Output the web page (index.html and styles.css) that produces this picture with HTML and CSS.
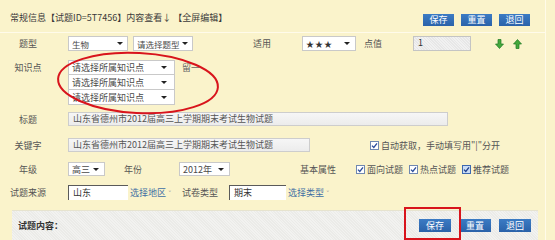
FILE: index.html
```html
<!DOCTYPE html>
<html lang="zh-CN">
<head>
    <meta charset="UTF-8">
    <title>试题内容查看</title>
    <link rel="stylesheet" href="styles.css">
</head>
<body>
    <div class="page">
        <!-- 标题栏 -->
        <div class="head">
            <span class="head-title">常规信息【试题ID=5T7456】内容查看↓ 【全屏编辑】</span>
            <div class="btns">
                <button class="btn">保存</button>
                <button class="btn">重置</button>
                <button class="btn">退回</button>
            </div>
        </div>

        <!-- 题型 / 适用 / 点值 -->
        <div class="row r-type">
            <span class="lbl">题型</span>
            <span class="sel w-type">生物</span>
            <span class="sel w-type ml5">请选择题型</span>
            <span class="txt t-fit">适用</span>
            <span class="sel w-level"><span class="stars">★★★</span></span>
            <span class="txt t-score">点值</span>
            <span class="inp inp-score">1</span>
            <svg class="arrow a-down" width="9" height="10" viewBox="0 0 9 10"><path d="M3 .5h3v4.5h2.5L4.5 9.5.5 5H3z" fill="#44a83c" stroke="#1e7a24" stroke-width=".7"/></svg>
            <svg class="arrow a-up" width="9" height="10" viewBox="0 0 9 10"><path d="M3 9.5h3V5h2.5L4.5.5.5 5H3z" fill="#44a83c" stroke="#1e7a24" stroke-width=".7"/></svg>
        </div>

        <!-- 知识点 -->
        <div class="row r-kp">
            <span class="lbl lbl-top">知识点</span>
            <div class="kp-list">
                <span class="sel w-kp">请选择所属知识点</span>
                <span class="sel w-kp">请选择所属知识点</span>
                <span class="sel w-kp">请选择所属知识点</span>
            </div>
            <span class="kp-note">留一</span>
        </div>

        <!-- 标题 -->
        <div class="row r-title">
            <span class="lbl">标题</span>
            <span class="inp inp-grey w-title">山东省德州市2012届高三上学期期末考试生物试题</span>
        </div>

        <!-- 关键字 -->
        <div class="row r-key">
            <span class="lbl">关键字</span>
            <span class="inp inp-grey w-key">山东省德州市2012届高三上学期期末考试生物试题</span>
            <span class="check ml60">
                <svg class="cb" width="9" height="9" viewBox="0 0 9 9"><rect x=".5" y=".5" width="8" height="8" fill="#fff" stroke="#7088b0"/><path d="M2 4.6l1.8 1.9L7 2.4" fill="none" stroke="#2a4c9a" stroke-width="1.3"/></svg>
                自动获取，手动填写用"|"分开
            </span>
        </div>

        <!-- 年级 / 年份 / 基本属性 -->
        <div class="row r-grade">
            <span class="lbl">年级</span>
            <span class="sel w-grade">高三</span>
            <span class="txt t-year">年份</span>
            <span class="sel w-year">2012年</span>
            <span class="txt t-attr">基本属性</span>
            <span class="check ml19">
                <svg class="cb" width="9" height="9" viewBox="0 0 9 9"><rect x=".5" y=".5" width="8" height="8" fill="#fff" stroke="#7088b0"/><path d="M2 4.6l1.8 1.9L7 2.4" fill="none" stroke="#2a4c9a" stroke-width="1.3"/></svg>
                面向试题
            </span>
            <span class="check ml6">
                <svg class="cb" width="9" height="9" viewBox="0 0 9 9"><rect x=".5" y=".5" width="8" height="8" fill="#fff" stroke="#7088b0"/><path d="M2 4.6l1.8 1.9L7 2.4" fill="none" stroke="#2a4c9a" stroke-width="1.3"/></svg>
                热点试题
            </span>
            <span class="check ml6">
                <svg class="cb" width="9" height="9" viewBox="0 0 9 9"><rect x=".5" y=".5" width="8" height="8" fill="#c9dcf5" stroke="#3d68b0"/><path d="M2 4.6l1.8 1.9L7 2.4" fill="none" stroke="#1f3f8c" stroke-width="1.3"/></svg>
                推荐试题
            </span>
        </div>

        <!-- 试题来源 / 试卷类型 -->
        <div class="row r-src">
            <span class="lbl">试题来源</span>
            <span class="inp inp-inset w-src">山东</span>
            <span class="pick w-pick">选择地区 <span class="caret">˅</span></span>
            <span class="txt t-paper">试卷类型</span>
            <span class="inp inp-inset w-paper">期末</span>
            <span class="pick">选择类型 <span class="caret">˅</span></span>
        </div>

        <!-- 试题内容 -->
        <div class="panel">
            <span class="panel-title">试题内容：</span>
            <div class="btns">
                <button class="btn btn-lg">保存</button>
                <button class="btn btn-lg">重置</button>
                <button class="btn btn-lg">退回</button>
            </div>
        </div>

        <!-- 红色标注 -->
        <svg class="marks" width="555" height="240" viewBox="0 0 555 240">
            <ellipse cx="138" cy="83" rx="80" ry="30" transform="rotate(3 138 83)" fill="none" stroke="#d8141c" stroke-width="2"/>
            <rect x="405" y="208" width="55" height="31" fill="none" stroke="#d8141c" stroke-width="2"/>
        </svg>
    </div>
</body>
</html>
```

FILE: styles.css
```css
/* 页面基础 */
body {
    margin: 0;
    background: #faf3cb;
    font-family: "Noto Sans CJK SC", sans-serif;
    font-size: 9px;
    color: #555;
}

.page {
    position: relative;
    width: 546px;
    height: 240px;
    box-sizing: border-box;
    border-right: 1px solid #fffbe9;
}

/* 标题栏 */
.head {
    display: flex;
    justify-content: space-between;
    align-items: flex-start;
    height: 20px;
    padding: 12px 15px 0 10px;
    border-bottom: 1px solid #fffbea;
}

.head-title {
    line-height: 12px;
    color: #3a3a3a;
}

.btns {
    display: flex;
}

.btn {
    width: 31px;
    height: 12px;
    margin: 2px 0 0 7px;
    padding: 0;
    border: none;
    background: linear-gradient(#3b7bc4, #2a62a9);
    color: #fff;
    font: 9px/12px "Noto Sans CJK SC", sans-serif;
}

.btn-lg {
    width: 32px;
    height: 13px;
    margin: 0 0 0 8px;
    line-height: 13px;
}

/* 表单行 */
.row {
    display: flex;
    align-items: center;
}

.r-type { margin-top: 3px; height: 15px; }
.r-kp { margin-top: 9px; align-items: flex-start; }
.r-title { margin-top: 7px; height: 14px; }
.r-key { margin-top: 12px; height: 14px; }
.r-grade { margin-top: 10px; height: 14px; }
.r-src { margin-top: 9px; height: 15px; }

.lbl {
    flex: none;
    width: 40px;
    margin: 0 20px 0 8px;
    text-align: center;
    white-space: nowrap;
}

.lbl-top {
    line-height: 15px;
}

.txt {
    flex: none;
    white-space: nowrap;
}

.t-fit { margin-left: 60px; width: 18px; }
.t-score { margin-left: 8px; width: 18px; }
.t-year { margin-left: 19px; width: 18px; }
.t-attr { margin-left: 70px; width: 37px; }
.t-paper { margin-left: 8px; width: 40px; }

/* 下拉框 */
.sel {
    flex: none;
    display: flex;
    align-items: center;
    justify-content: space-between;
    gap: 2px;
    height: 15px;
    box-sizing: border-box;
    padding: 0 5px 0 3px;
    background: #fff;
    border: 1px solid #c9c9c9;
    white-space: nowrap;
    color: #4a4a4a;
}

.sel::after {
    content: "";
    flex: none;
    border-left: 3px solid transparent;
    border-right: 3px solid transparent;
    border-top: 3px solid #222;
}

.w-type { width: 60px; font-size: 8.5px; padding-right: 4px; }
.w-level { width: 54px; margin-left: 31px; }
.w-kp { width: 107px; padding-right: 7px; }
.w-grade { width: 37px; height: 14px; }
.w-year { width: 51px; height: 14px; margin-left: 37px; }
.ml5 { margin-left: 5px; }
.ml6 { margin-left: 6px; }
.ml19 { margin-left: 19px; }
.ml60 { margin-left: 60px; }

.stars {
    font-size: 8px;
    letter-spacing: 1px;
    color: #333;
}

.kp-list {
    display: flex;
    flex-direction: column;
}

.kp-list .sel + .sel {
    border-top: none;
    height: 15px;
}

.kp-note {
    margin-left: 7px;
    line-height: 15px;
    color: #666;
}

/* 输入框 */
.inp {
    flex: none;
    height: 14px;
    box-sizing: border-box;
    padding-left: 4px;
    line-height: 12px;
    white-space: nowrap;
    overflow: hidden;
}

.inp-score {
    width: 58px;
    height: 15px;
    margin-left: 31px;
    border: 1px solid #c4c4c4;
    background: repeating-linear-gradient(45deg, #f1f1f1 0 1px, #e7e7e7 1px 2px);
    color: #333;
}

.inp-grey {
    border: 1px solid #cdcdcd;
    background: linear-gradient(#f6f6f6, #ececec);
    color: #555;
}

.w-title { width: 380px; }
.w-key { width: 242px; }

.inp-inset {
    height: 15px;
    border-top: 1px solid #5a5a5a;
    border-left: 1px solid #5a5a5a;
    background: #fff;
    color: #333;
    line-height: 13px;
}

.w-src { width: 60px; }
.w-paper { width: 57px; margin-left: 7px; }

.pick {
    flex: none;
    margin-left: 2px;
    color: #3f6fa3;
    white-space: nowrap;
}

.w-pick { width: 44px; }

.caret {
    color: #999;
    font-family: "DejaVu Sans", sans-serif;
    font-size: 7px;
}

.arrow { flex: none; }
.a-down { margin-left: 24px; }
.a-up { margin-left: 9px; }

/* 复选框 */
.check {
    display: flex;
    align-items: center;
    gap: 2px;
    flex: none;
    white-space: nowrap;
}

/* 试题内容面板 */
.panel {
    display: flex;
    justify-content: space-between;
    align-items: center;
    width: 526px;
    height: 30px;
    box-sizing: border-box;
    margin: 10px 0 0 12px;
    padding: 0 7px 0 6px;
    background: repeating-linear-gradient(45deg, #f2f2f0 0 1px, #ebebe8 1px 2px);
    border-top: 1px solid #e6e3cf;
}

.panel-title {
    font-weight: bold;
    color: #333;
}

/* 标注覆盖层 */
.marks {
    position: absolute;
    top: 0;
    left: 0;
    pointer-events: none;
}
```
